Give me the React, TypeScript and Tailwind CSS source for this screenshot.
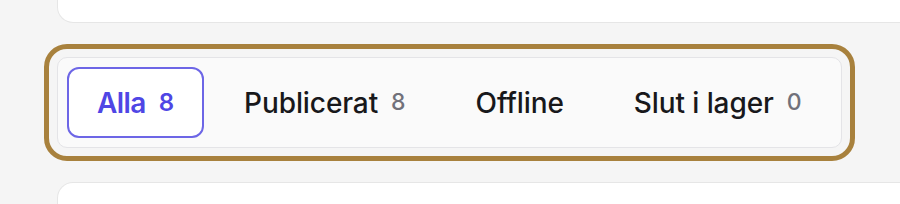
const tabs = [
  { label: "Alla", count: 8, active: true },
  { label: "Publicerat", count: 8 },
  { label: "Offline" },
  { label: "Slut i lager", count: 0 },
];

export default function App() {
  return (
    <div className="h-[204px] w-[900px] overflow-hidden bg-[#f5f5f5] font-['Inter',sans-serif]">
      <div className="flex flex-col gap-[34px] pl-[57px]">
        <div className="h-[23px] w-[900px] rounded-b-[16px] border-x border-b border-[#e6e6e6] bg-white" />

        <div className="self-start">
          <div className="flex gap-[10px] rounded-[10px] border border-[#e4e4e7] bg-[#fafafa] p-[9px] outline-[5px] outline-offset-[8px] outline-[#a8813d] outline-solid">
            {tabs.map((t) => (
              <button
                key={t.label}
                className={
                  t.active
                    ? "flex h-[71px] items-center gap-[13px] rounded-[12px] border-2 border-[#6d66e6] bg-white px-[28px] text-[#4f46e5]"
                    : "flex h-[71px] items-center gap-[13px] rounded-[12px] border-2 border-transparent px-[28px] text-[#18181b]"
                }
              >
                <span
                  className={
                    t.active
                      ? "text-[28px] font-semibold tracking-[-0.6px]"
                      : "text-[28px] font-medium tracking-[-0.1px]"
                  }
                >
                  {t.label}
                </span>
                {t.count !== undefined && (
                  <span
                    className={
                      t.active
                        ? "text-[24px] font-semibold text-[#4f46e5]"
                        : "text-[23px] font-medium text-[#71717a]"
                    }
                  >
                    {t.count}
                  </span>
                )}
              </button>
            ))}
          </div>
        </div>

        <div className="h-[40px] w-[900px] rounded-t-[16px] border-x border-t border-[#e6e6e6] bg-white" />
      </div>
    </div>
  );
}
